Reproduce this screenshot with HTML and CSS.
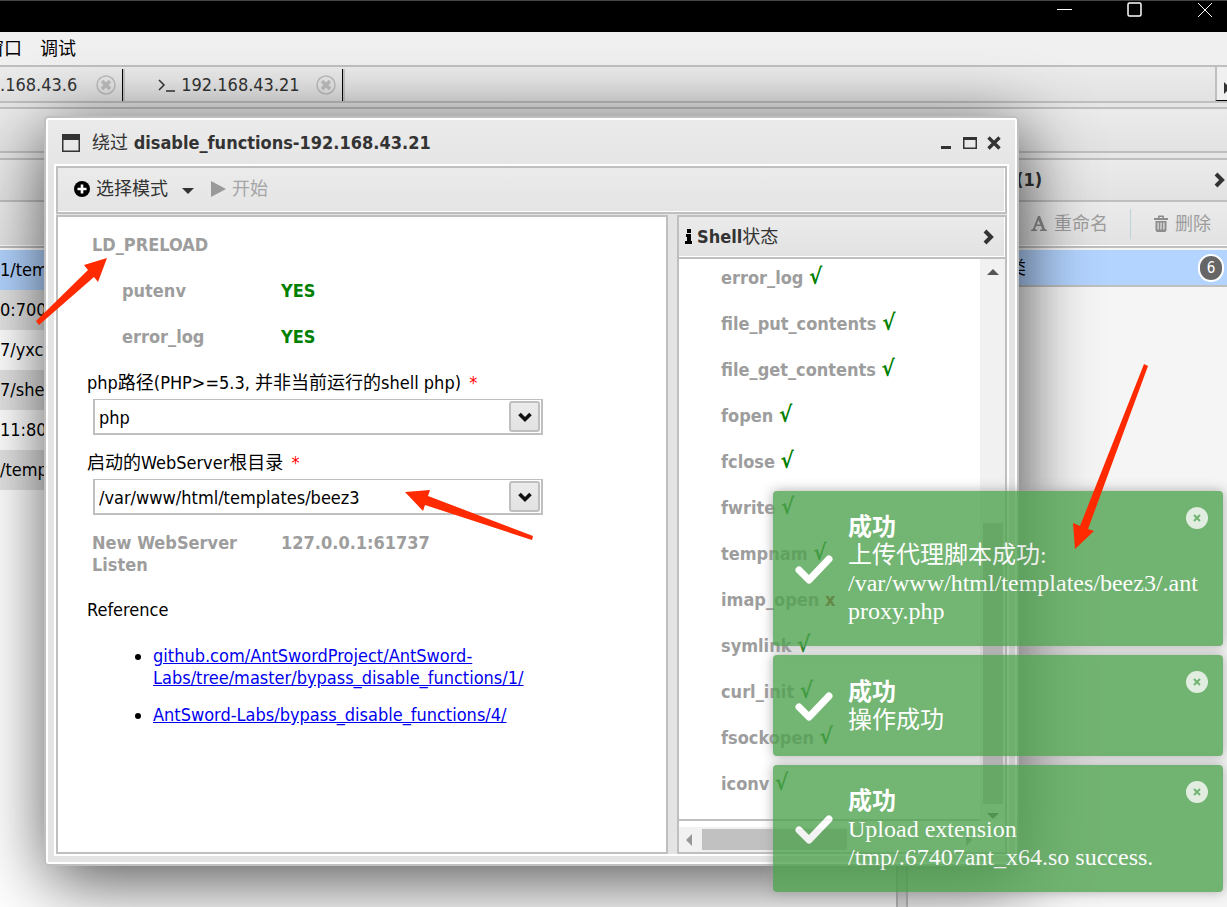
FILE: index.html
```
<!DOCTYPE html>
<html lang="zh-CN">
<head>
<meta charset="utf-8">
<title>AntSword</title>
<link rel="stylesheet" href="styles.css">
</head>
<body>
<div class="app">
  <header class="titlebar">
    <button class="sys" aria-label="最小化"><svg width="16" height="16" viewBox="0 0 16 16"><path d="M0 7.500h15"/></svg></button>
    <button class="sys" aria-label="最大化"><svg width="16" height="16" viewBox="0 0 16 16"><rect x="1" y="1" width="13" height="13" rx="1.500" stroke-width="1.500"/></svg></button>
    <button class="sys" aria-label="关闭"><svg width="16" height="16" viewBox="0 0 16 16"><path d="M1 1l14 14M15 1L1 15"/></svg></button>
  </header>
  <nav class="menu"><button class="menu-item">窗口</button><button class="menu-item">调试</button></nav>
  <div class="tabs">
    <div class="tab tab-first"><span>.168.43.6</span><button class="tab-close" aria-label="关闭标签"><svg width="20" height="20" viewBox="0 0 20 20"><circle cx="10" cy="10" r="9"/><path d="M6 6l8 8M14 6l-8 8"/></svg></button></div>
    <div class="tab"><svg class="prompt" width="18" height="18" viewBox="0 0 18 18"><path d="M1 4l5 5-5 5M8 15h9"/></svg><span>192.168.43.21</span><button class="tab-close" aria-label="关闭标签"><svg width="20" height="20" viewBox="0 0 20 20"><circle cx="10" cy="10" r="9"/><path d="M6 6l8 8M14 6l-8 8"/></svg></button></div>
    <button class="tab-next" aria-label="下一个标签"><svg width="10" height="12" viewBox="0 0 10 12"><path d="M1 0l6 6-6 6z"/></svg></button>
  </div>
  <div class="strip"></div>
  <main class="panes">
    <section class="list-pane">
      <div class="pane-head"></div>
      <div class="pane-tools"></div>
      <ul class="rows">
        <li class="row selected">1/temp</li>
        <li class="row odd">0:700</li>
        <li class="row">7/yxc</li>
        <li class="row odd">7/she</li>
        <li class="row">11:80</li>
        <li class="row odd">/temp</li>
      </ul>
    </section>
    <section class="cat-pane">
      <div class="pane-head">
        <h2>(1)</h2>
        <button class="plain" aria-label="折叠"><svg class="chev" width="12" height="16" viewBox="0 0 12 16"><path d="M2 2l6 6-6 6"/></svg></button>
      </div>
      <div class="pane-tools">
        <button class="tool"><svg width="18" height="18" viewBox="0 0 18 18"><path fill-rule="evenodd" d="M8 1h2l5 13 2 1v1h-7v-1l2-1-1-3H6l-1 3 2 1v1H1v-1l2-1zM8.500 5L6.700 9.500h3.600z"/></svg>重命名</button>
        <span class="sep"></span>
        <button class="tool"><svg width="16" height="18" viewBox="0 0 16 18"><path fill-rule="evenodd" d="M5 1.500Q5 .5 6 .5h4q1 0 1 1V3h4v2H1V3h4zM6.500 2v1h3V2zM2.500 6h11v9q0 2-2 2h-7q-2 0-2-2zM4.500 7.500v7h1.200v-7zM7.400 7.500v7h1.200v-7zM10.300 7.500v7h1.200v-7z"/></svg>删除</button>
      </div>
      <div class="cat-row"><span>类</span><span class="badge">6</span></div>
    </section>
  </main>
</div>

<div class="window" role="dialog" aria-labelledby="win-title">
  <div class="win-head">
    <svg class="win-icon" width="18" height="18" viewBox="0 0 18 18"><path d="M0 0h18v18H0zM1.500 6v10.500h15V6z" fill-rule="evenodd"/></svg>
    <h1 id="win-title"><span class="thin">绕过</span> disable_functions-192.168.43.21</h1>
    <button class="plain" aria-label="最小化"><svg width="14" height="14" viewBox="0 0 14 14"><path d="M2 10h10v3H2z"/></svg></button>
    <button class="plain" aria-label="最大化"><svg width="14" height="14" viewBox="0 0 14 14"><path d="M0 1h14v12H0zM1.500 4v7.500h11V4z" fill-rule="evenodd"/></svg></button>
    <button class="plain" aria-label="关闭"><svg width="14" height="14" viewBox="0 0 14 14"><path d="M1.500 1.500l11 11M12.500 1.500l-11 11" stroke="#333" stroke-width="3.400"/></svg></button>
  </div>
  <div class="win-body">
    <div class="win-tools">
      <button class="mode"><svg width="16" height="16" viewBox="0 0 16 16"><circle cx="8" cy="8" r="8"/><path d="M8 3.500v9M3.500 8h9" stroke="#fff" stroke-width="2.600"/></svg>选择模式<svg class="caret" width="12" height="6" viewBox="0 0 12 6"><path d="M0 0h12L6 6z"/></svg></button>
      <button class="mode start" disabled><svg width="15" height="16" viewBox="0 0 15 16"><path d="M0 0l15 8-15 8z"/></svg>开始</button>
    </div>
    <div class="win-cols">
      <form class="form">
        <p class="lbl group">LD_PRELOAD</p>
        <p class="lbl pair sub"><span>putenv</span><span class="ok">YES</span></p>
        <p class="lbl pair sub"><span>error_log</span><span class="ok">YES</span></p>
        <label class="field" for="php">php路径(PHP&gt;=5.3, 并非当前运行的shell php) <span class="req">*</span></label>
        <div class="combo"><input id="php" type="text" value="php"><button type="button" aria-label="展开"><svg width="16" height="12" viewBox="0 0 16 12"><path d="M2.500 3L8 8.500 13.500 3"/></svg></button></div>
        <label class="field" for="root">启动的WebServer根目录 <span class="req">*</span></label>
        <div class="combo"><input id="root" type="text" value="/var/www/html/templates/beez3"><button type="button" aria-label="展开"><svg width="16" height="12" viewBox="0 0 16 12"><path d="M2.500 3L8 8.500 13.500 3"/></svg></button></div>
        <p class="lbl pair listen"><span>New WebServer Listen</span><span>127.0.0.1:61737</span></p>
        <p class="ref">Reference</p>
        <ul class="links">
          <li><a href="#lab1">github.com/AntSwordProject/AntSword-<br>Labs/tree/master/bypass_disable_functions/1/</a></li>
          <li><a href="#lab4">AntSword-Labs/bypass_disable_functions/4/</a></li>
        </ul>
      </form>
      <section class="status">
        <div class="status-head">
          <svg width="8" height="16" viewBox="0 0 8 16"><path d="M2 0h4v4H2zM1 5h5v7h1v3H0v-3h2V8H1z"/></svg>
          <h2>Shell<span class="thin">状态</span></h2>
          <button class="plain" aria-label="折叠"><svg class="chev" width="12" height="16" viewBox="0 0 12 16"><path d="M2 2l6 6-6 6"/></svg></button>
        </div>
        <div class="status-main">
          <ul class="funcs">
            <li>error_log <b class="ok mark">√</b></li>
            <li>file_put_contents <b class="ok mark">√</b></li>
            <li>file_get_contents <b class="ok mark">√</b></li>
            <li>fopen <b class="ok mark">√</b></li>
            <li>fclose <b class="ok mark">√</b></li>
            <li>fwrite <b class="ok mark">√</b></li>
            <li>tempnam <b class="ok mark">√</b></li>
            <li>imap_open <b class="bad">x</b></li>
            <li>symlink <b class="ok mark">√</b></li>
            <li>curl_init <b class="ok mark">√</b></li>
            <li>fsockopen <b class="ok mark">√</b></li>
            <li>iconv <b class="ok mark">√</b></li>
          </ul>
          <div class="vbar"><svg width="12" height="6" viewBox="0 0 12 6"><path d="M0 6h12L6 0z"/></svg><i class="vthumb"></i><svg width="12" height="6" viewBox="0 0 12 6"><path d="M0 0h12L6 6z"/></svg></div>
        </div>
        <div class="hbar"><svg width="6" height="12" viewBox="0 0 6 12"><path d="M6 0v12L0 6z"/></svg><i class="hthumb"></i><svg width="6" height="12" viewBox="0 0 6 12"><path d="M0 0v12l6-6z"/></svg></div>
      </section>
    </div>
  </div>
</div>

<div class="toasts">
  <div class="toast" role="status">
    <svg class="check" width="38" height="30" viewBox="0 0 38 30"><path d="M4 16l10 10L34 5"/></svg>
    <div class="msg"><strong>成功</strong><br>上传代理脚本成功:<br>/var/www/html/templates/beez3/.ant<br>proxy.php</div>
    <button class="toast-close" aria-label="关闭"><svg width="22" height="22" viewBox="0 0 22 22"><circle cx="11" cy="11" r="11"/><path d="M8 8l6 6M14 8l-6 6"/></svg></button>
  </div>
  <div class="toast" role="status">
    <svg class="check" width="38" height="30" viewBox="0 0 38 30"><path d="M4 16l10 10L34 5"/></svg>
    <div class="msg"><strong>成功</strong><br>操作成功</div>
    <button class="toast-close" aria-label="关闭"><svg width="22" height="22" viewBox="0 0 22 22"><circle cx="11" cy="11" r="11"/><path d="M8 8l6 6M14 8l-6 6"/></svg></button>
  </div>
  <div class="toast" role="status">
    <svg class="check" width="38" height="30" viewBox="0 0 38 30"><path d="M4 16l10 10L34 5"/></svg>
    <div class="msg"><strong>成功</strong><br>Upload extension<br>/tmp/.67407ant_x64.so success.</div>
    <button class="toast-close" aria-label="关闭"><svg width="22" height="22" viewBox="0 0 22 22"><circle cx="11" cy="11" r="11"/><path d="M8 8l6 6M14 8l-6 6"/></svg></button>
  </div>
</div>

<svg class="arrows" width="1227" height="907" viewBox="0 0 1227 907" aria-hidden="true">
  <path d="M107 258L84 265l4 5-52 51 3 4 55-48 4 5z"/>
  <path d="M405 492l25-2-2 6 105 40-1 4-107-35-2 6z"/>
  <path d="M1075 549l-2-26 7 3 64-162 4 2-60 163 6 2z"/>
</svg>
</body>
</html>
```
FILE: styles.css
```
* { box-sizing: border-box; }
body {
  margin: 0;
  height: 100vh;
  overflow: hidden;
  position: relative;
  background: #fff;
  color: #333;
  font: 18px/22px "DejaVu Sans Condensed", "Noto Sans CJK SC", sans-serif;
}
h1, h2, p, ul { margin: 0; padding: 0; font-size: 18px; line-height: 22px; }
ul { list-style: none; }
button { font: inherit; color: inherit; background: none; border: 0; padding: 0; }
svg { display: block; flex: none; }
.thin { font-weight: 400; }
.plain { display: flex; align-items: center; fill: #333; }
.chev { fill: none; stroke: #333; stroke-width: 4; }

.app { height: 100%; display: flex; flex-direction: column; background: #e6e6e6; }
.titlebar {
  height: 32px;
  flex: none;
  display: flex;
  justify-content: flex-end;
  align-items: flex-start;
  gap: 54px;
  padding: 1px 14px 0 0;
  background: #000;
  border-top: 1px solid #444;
}
.sys svg { fill: none; stroke: #fff; }
.menu {
  height: 33px;
  flex: none;
  display: flex;
  gap: 18px;
  margin-left: -14px;
  padding-top: 1px;
  background: #f0f0f0;
  color: #000;
}
.tabs {
  height: 38px;
  flex: none;
  display: flex;
  border-top: 2px solid #bfbfbf;
  border-bottom: 2px solid #bfbfbf;
  background: linear-gradient(#ebebeb, #e2e2e2);
}
.tab {
  display: flex;
  align-items: center;
  margin-top: 2px;
  padding: 0 6px 0 35px;
  border-right: 1px solid #000;
  box-shadow: 2px 0 #c4c4c4;
}
.tab span { margin-right: 16px; }
.tab-first { padding-left: 0; }
.tab-first span { margin-right: 19px; }
.prompt { fill: none; stroke: #333; stroke-width: 1.500; margin-right: 5px; }
.tab-close svg { fill: none; stroke: #bdbdbd; stroke-width: 1.500; }
.tab-close path { stroke-width: 3.500; }
.tab-next {
  width: 12px;
  margin-left: auto;
  padding: 8px 0 0 6px;
  overflow: hidden;
  border-left: 2px solid #bfbfbf;
  border-bottom: 1px solid #000;
  background: #f0f0f0;
  fill: #333;
}
.strip {
  height: 46px;
  flex: none;
  margin-top: 4px;
  border-top: 2px solid #bfbfbf;
  border-bottom: 2px solid #bfbfbf;
  background: linear-gradient(#ebebeb, #e2e2e2);
}
.panes { flex: 1; min-height: 0; display: flex; gap: 8px; margin-top: 5px; }
.list-pane { flex: 1; background: #fff; border: 2px solid #bfbfbf; border-width: 2px 2px 0 0; }
.cat-pane { width: 321px; background: #f5f5f5; border: 2px solid #bfbfbf; border-width: 2px 0 0 2px; }
.pane-head, .pane-tools {
  display: flex;
  align-items: center;
  background: linear-gradient(#ebebeb, #e2e2e2);
  border-bottom: 2px solid #bfbfbf;
}
.pane-head { height: 42px; justify-content: space-between; padding: 0 1px 0 108px; }
.pane-tools { height: 46px; padding-right: 16px; justify-content: flex-end; gap: 22px; box-shadow: inset 0 -1px #fff; }
.tool { display: flex; align-items: center; gap: 6px; color: #9d9d9d; fill: #8c8c8c; }
.sep { width: 1px; height: 30px; background: #bcd3d8; }
.rows { margin-top: 2px; color: #000; }
.row { height: 40px; line-height: 40px; }
.row.odd { background: #e3e3e3; }
.row.selected { background: #b3d4ff; }
.cat-row {
  display: flex;
  align-items: center;
  justify-content: space-between;
  height: 37px;
  margin-top: 2px;
  padding: 0 3px 0 100px;
  background: #b3d4ff;
  border-bottom: 2px solid #bfbfbf;
  color: #000;
}
.badge {
  width: 26px;
  height: 28px;
  border: 2px solid #fff;
  border-radius: 13px;
  background: #666;
  color: #fff;
  font-size: 15px;
  line-height: 24px;
  text-align: center;
}

.window {
  position: absolute;
  inset: 116px 208px 41px 44px;
  display: flex;
  flex-direction: column;
  padding: 0 8px 8px;
  background: linear-gradient(#ebebeb, #e4e4e4 60px);
  border: 2px solid #bfbfbf;
  border-radius: 4px;
  box-shadow: inset 0 0 0 2px #fff, 4px 14px 70px rgba(0, 0, 0, .7);
}
.win-head { height: 46px; flex: none; display: flex; align-items: center; gap: 10px; padding: 4px 8px 0 8px; }
.win-head h1 { flex: 1; margin-left: 2px; }
.win-head path { fill: #333; }
.win-body {
  flex: 1;
  min-height: 0;
  display: flex;
  flex-direction: column;
  gap: 1px;
  border: 2px solid #fff;
}
.win-tools {
  height: 48px;
  flex: none;
  display: flex;
  align-items: center;
  gap: 17px;
  padding: 0 16px 2px;
  background: linear-gradient(#ebebeb, #e4e4e4);
  border: 2px solid #bfbfbf;
  box-shadow: inset -1px -1px #fff;
}
.mode { display: flex; align-items: center; gap: 6px; }
.mode svg { fill: #000; }
.mode .caret { margin: 3px 0 0 8px; fill: #333; }
.start, .mode.start svg { color: #a5a5a5; fill: #999; }
.win-cols { flex: 1; min-height: 0; display: flex; gap: 9px; }
.form {
  flex: 1;
  padding: 17px 29px;
  background: #fff;
  border: 2px solid #bfbfbf;
  color: #000;
}
.lbl { color: #9d9d9d; font-weight: 700; }
.group { margin: 0 0 24px 5px; }
.pair { display: grid; grid-template-columns: 189px 1fr; margin-left: 5px; }
.sub { grid-template-columns: 159px 1fr; margin: 0 0 24px 35px; }
.ok { color: green; }
.bad { color: #b22222; }
.mark { font-size: 22px; line-height: 1px; }
.field { display: block; margin-bottom: 5px; }
.req { color: red; margin-left: 3px; }
.combo {
  display: flex;
  width: 450px;
  height: 36px;
  margin: 0 0 17px 6px;
  padding: 1px;
  border: 2px solid #bfbfbf;
  border-top-width: 1px;
}
.combo input { flex: 1; min-width: 0; border: 0; outline: 0; padding: 2px 3px 0; font: inherit; color: #000; }
.combo button {
  width: 31px;
  display: grid;
  place-items: center;
  border: 2px solid #bfbfbf;
  border-radius: 3px;
  background: linear-gradient(#ebebeb, #e2e2e2);
}
.combo path { fill: none; stroke: #111; stroke-width: 3.600; }
.listen { margin-bottom: 23px; }
.listen span:first-child { width: 160px; }
.links { margin-top: 24px; padding-left: 66px; list-style: disc; }
.links li { margin-bottom: 15px; }
.links a { color: #00e; }
.status {
  width: 330px;
  display: flex;
  flex-direction: column;
  background: #fff;
  border: 2px solid #bfbfbf;
}
.status-head {
  height: 42px;
  flex: none;
  display: flex;
  align-items: center;
  gap: 4px;
  padding: 0 10px 0 6px;
  background: linear-gradient(#ebebeb, #e2e2e2);
  border-bottom: 2px solid #bfbfbf;
  box-shadow: inset -1px -1px #fff;
}
.status-head h2 { flex: 1; }
.status-main { flex: 1; min-height: 0; display: flex; overflow: hidden; }
.funcs { flex: 1; padding: 8px 0 0 42px; color: #9d9d9d; font-weight: 700; border-bottom: 2px solid #bfbfbf; }
.funcs li { height: 22px; margin-bottom: 24px; }
.vbar {
  width: 25px;
  display: flex;
  flex-direction: column;
  align-items: center;
  padding: 10px 0 2px;
  background: #f1f1f1;
  fill: #555;
}
.vthumb { width: 20px; height: 281px; margin: auto 0 9px; background: #c1c1c1; }
.hbar { height: 25px; flex: none; display: flex; align-items: center; margin-top: 6px; padding: 2px 33px 2px 7px; background: #f1f1f1; fill: #999; }
.hthumb { width: 145px; height: 21px; margin: 0 auto 0 10px; background: #c1c1c1; }

.toasts { position: absolute; right: 4px; bottom: 15px; width: 450px; display: flex; flex-direction: column; gap: 9px; }
.toast {
  display: flex;
  align-items: center;
  min-height: 101px;
  padding: 22px 15px 21px 22px;
  background: #51a351;
  border-radius: 4px;
  box-shadow: 0 0 12px #999;
  opacity: .8;
  color: #fff;
  font: 24px/28px "Liberation Serif", "Noto Sans CJK SC", serif;
}
.check { fill: none; stroke: #fff; stroke-width: 7; stroke-linecap: round; stroke-linejoin: round; }
.msg { flex: 1; margin-left: 15px; white-space: nowrap; }
.toast-close { align-self: flex-start; margin-top: -6px; margin-left: -22px; opacity: .8; }
.toast-close circle { fill: #fff; }
.toast-close path { stroke: #51a351; stroke-width: 2; }
.arrows { position: absolute; left: 0; top: 0; fill: #ff2a00; pointer-events: none; }
```
